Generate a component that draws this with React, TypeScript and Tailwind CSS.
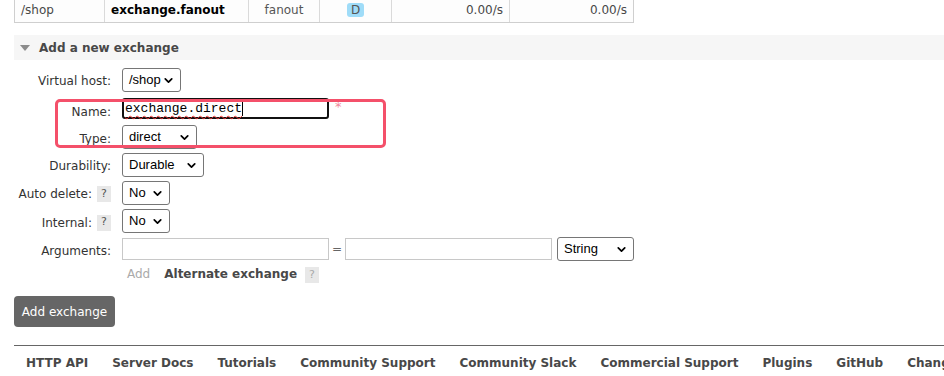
import React from 'react';
import { ChevronDown } from 'lucide-react';

const verdana = "font-['DejaVu_Sans',Verdana,sans-serif]";

function FakeSelect({ value, width }: { value: string; width: string }) {
  return (
    <div
      className={`${width} h-[24px] flex items-center justify-between border border-[#767676] rounded-[3px] bg-white pl-[6px] pr-[5px] text-[13px] text-black font-['Liberation_Sans',Arial,sans-serif]`}
    >
      <span>{value}</span>
      <ChevronDown size={13} strokeWidth={3.2} className="text-black" />
    </div>
  );
}

function Help({ faded }: { faded?: boolean }) {
  return (
    <span
      className={`inline-flex items-center justify-center w-[14px] h-[16px] bg-[#e8e8e8] text-[11px] ${faded ? 'text-[#aaa]' : 'text-[#555]'}`}
    >
      ?
    </span>
  );
}

function Row({
  label,
  help,
  height,
  children,
  labelClass = '',
}: {
  label: string;
  help?: boolean;
  height: string;
  children: React.ReactNode;
  labelClass?: string;
}) {
  return (
    <div className={`flex items-center ${height}`}>
      <div className={`w-[97px] flex items-center justify-end gap-[5px] ${labelClass}`}>
        <span>{label}</span>
        {help && <Help />}
      </div>
      <div className="ml-[11px] flex items-center">{children}</div>
    </div>
  );
}

export default function App() {
  const footer = [
    'HTTP API',
    'Server Docs',
    'Tutorials',
    'Community Support',
    'Community Slack',
    'Commercial Support',
    'Plugins',
    'GitHub',
    'Changelog',
  ];

  return (
    <div className={`w-[944px] h-[376px] overflow-hidden bg-white text-[12px] text-[#333] ${verdana}`}>
      {/* exchanges table, last row */}
      <div className="ml-[14px] w-[620px] h-[23px] flex border-l border-r border-b border-[#cfcfcf] bg-[#fdfdfd] text-[#484848]">
        <div className="w-[90px] pl-[6px] pt-[1px] border-r border-[#dadada]">/shop</div>
        <div className="w-[144px] pl-[6px] pt-[1px] border-r border-[#dadada] font-bold text-black">
          exchange.fanout
        </div>
        <div className="w-[71px] pt-[1px] text-center border-r border-[#dadada] text-[#555]">fanout</div>
        <div className="w-[72px] flex justify-center pt-[3px] border-r border-[#dadada]">
          <span className="h-[14px] px-[4px] leading-[15px] rounded-[3px] bg-[#9fdcf8] text-[#555]">D</span>
        </div>
        <div className="w-[118px] pr-[6px] pt-[1px] text-right border-r border-[#dadada]">0.00/s</div>
        <div className="flex-1 pr-[6px] pt-[1px] text-right">0.00/s</div>
      </div>

      {/* section header */}
      <div className="mt-[12px] ml-[14px] h-[25px] bg-[#f6f6f6] flex items-center">
        <svg width="10" height="6" viewBox="0 0 10 6" className="ml-[6px]">
          <polygon points="0,0 10,0 5,6" fill="#8c8c8c" />
        </svg>
        <span className="ml-[9px] text-[12px] font-bold text-[#484848]">Add a new exchange</span>
      </div>

      {/* form */}
      <div className="relative mt-[6px] ml-[14px]">
        <Row label="Virtual host:" height="h-[28px]" labelClass="pt-[2px]">
          <FakeSelect value="/shop" width="w-[59px]" />
        </Row>
        <Row label="Name:" height="h-[29px]" labelClass="pt-[7px]">
          <div className="w-[207px] h-[21px] border-2 border-[#111] rounded-[3px] flex items-center pl-[1px] font-['Liberation_Mono','Courier_New',monospace] text-[13px] text-black">
            <span className="underline decoration-wavy decoration-[#e33] decoration-1 underline-offset-[3px]">
              exchange.direct
            </span>
            <span className="w-[1px] h-[15px] bg-black" />
          </div>
          <span className="ml-[6px] -mt-[4px] text-[13px] text-[#f08a9a]">*</span>
        </Row>
        <Row label="Type:" height="h-[28px]" labelClass="pt-[3px]">
          <FakeSelect value="direct" width="w-[75px]" />
        </Row>
        <Row label="Durability:" height="h-[28px]" labelClass="pt-[2px]">
          <FakeSelect value="Durable" width="w-[82px]" />
        </Row>
        <Row label="Auto delete:" help height="h-[28px]" labelClass="pt-[2px]">
          <FakeSelect value="No" width="w-[48px]" />
        </Row>
        <Row label="Internal:" help height="h-[28px]" labelClass="pt-[3px]">
          <FakeSelect value="No" width="w-[48px]" />
        </Row>
        <Row label="Arguments:" height="h-[28px]" labelClass="pt-[3px]">
          <div className="w-[207px] h-[22px] border border-[#c8c8c8] bg-white" />
          <span className="w-[16px] text-center text-[#666]">=</span>
          <div className="w-[207px] h-[22px] border border-[#c8c8c8] bg-white" />
          <div className="ml-[5px]">
            <FakeSelect value="String" width="w-[77px]" />
          </div>
        </Row>
        <div className="flex items-center h-[22px] pl-[113px]">
          <span className="text-[#aaa]">Add</span>
          <span className="ml-[14px] font-bold text-[12px] text-[#484848]">Alternate exchange</span>
          <span className="ml-[8px]">
            <Help faded />
          </span>
        </div>

        {/* annotation highlight */}
        <div className="absolute left-[41px] top-[33px] w-[331px] h-[49px] border-[3px] border-[#f4506a] rounded-[5px] pointer-events-none" />
      </div>

      <button className="mt-[11px] ml-[14px] w-[101px] h-[31px] rounded-[4px] bg-[#666] text-white text-[12px]">
        Add exchange
      </button>

      <div className="mt-[18px] ml-[14px] border-t border-[#666]" />
      <div className="flex gap-[24px] pl-[26px] pt-[8px] whitespace-nowrap font-bold text-[12px] text-[#484848]">
        {footer.map((f) => (
          <span key={f}>{f}</span>
        ))}
      </div>
    </div>
  );
}
